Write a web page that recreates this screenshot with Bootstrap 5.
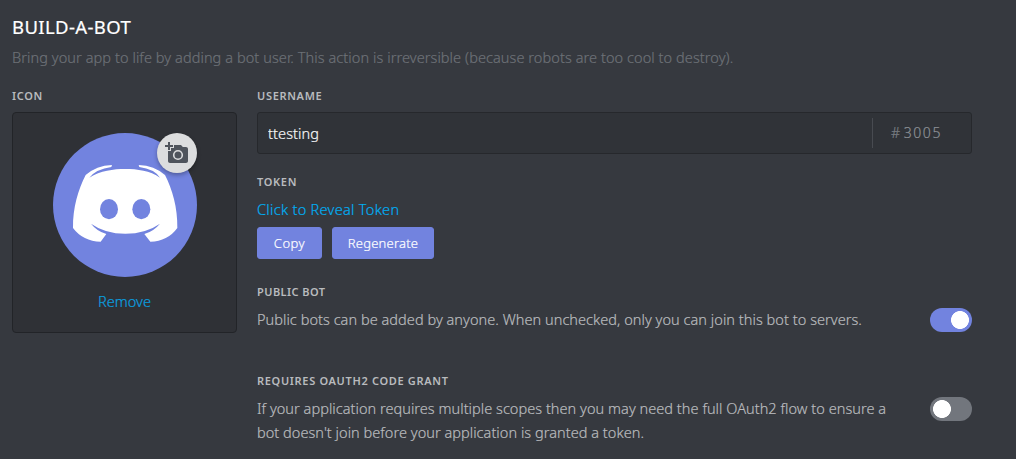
<!DOCTYPE html>
<html lang="en">
<head>
<meta charset="utf-8">
<meta name="viewport" content="width=device-width, initial-scale=1">
<title>Build-A-Bot</title>
<link href="https://cdn.jsdelivr.net/npm/bootstrap@5.3.0/dist/css/bootstrap.min.css" rel="stylesheet">
<style>
body{background:#36393f;font-family:"Noto Sans","Open Sans",sans-serif;font-size:14.5px;line-height:24px;font-weight:300;color:#b9bbbe;letter-spacing:.05px;-webkit-text-stroke:.2px;overflow:hidden}
.page{width:1016px;height:459px;padding:16px 44px 0 12px}
.title{font-size:18.5px;line-height:22px;font-weight:400;color:#fff;margin:0 0 7px;letter-spacing:.38px}
.intro{color:#6d7177;margin:0 0 19px;letter-spacing:.08px}
.caption{font-size:11px;line-height:16px;font-weight:600;letter-spacing:.68px;margin:0 0 8px;text-transform:uppercase;-webkit-text-stroke:0}
.caption.tight{letter-spacing:.45px}
.cols{gap:20px}
.icon-box{width:225px;height:221px;padding-top:20px;background:#2f3136;border:1px solid #222428;border-radius:4px}
.avatar{width:144px;height:144px}
.upload{width:40px;height:40px;background:#dcddde!important;box-shadow:0 2px 4px rgba(0,0,0,.3)}
.blue{color:#00aff4;text-decoration:none}
.remove{margin-top:12px;color:#0aa0e0}
.reveal{letter-spacing:.3px}
.name-field{height:42px;margin-bottom:20px;background:#303338;border:1px solid #26282c;border-radius:3px}
.name-field input{font-size:14.5px;font-weight:300;letter-spacing:.1px;color:#f6f6f7!important;padding:1px 10px 0;background:none!important;box-shadow:none!important}
.discrim{width:99px;height:30px;padding-left:18px;border-left:1px solid #484b51;color:#8e9297;font-size:14px;letter-spacing:1.6px}
.hash{margin-right:2px;color:#7c8086}
.token-area{margin-top:-1px}
.buttons{gap:10px;margin:6px 0 25px}
.btn-blurple{--bs-btn-color:#fff;--bs-btn-bg:#7283df;--bs-btn-border-color:#7283df;--bs-btn-hover-bg:#677bc4;--bs-btn-hover-color:#fff;height:32px;font-size:13px;line-height:20px;font-weight:300;padding:5px 0;border-radius:3px;letter-spacing:.2px}
.copy{width:65px;letter-spacing:.5px}
.regen{width:102px}
.setting{margin-bottom:41px}
.description{max-width:640px;margin:-1px 0 1px}
.oauth .description{letter-spacing:.045px}
.toggle{width:42px!important;height:24px;margin:0!important;border:0;background-color:#72767d!important;background-image:radial-gradient(circle at 12px 12px,#fff 8.6px,rgba(255,255,255,0) 9.3px)!important;background-position:0 0!important;background-size:42px 24px!important;box-shadow:none!important}
.toggle:checked{background-color:#7283df!important;background-image:radial-gradient(circle at 30px 12px,#fff 8.6px,rgba(255,255,255,0) 9.3px)!important}
</style>
</head>
<body>
<main class="page">
  <h1 class="title">BUILD-A-BOT</h1>
  <p class="intro">Bring your app to life by adding a bot user. This action is irreversible (because robots are too cool to destroy).</p>
  <div class="d-flex cols">
    <section>
      <h2 class="caption">Icon</h2>
      <div class="icon-box d-flex flex-column align-items-center">
        <div class="avatar position-relative">
          <svg class="d-block" width="144" height="144" viewBox="159 84 432 432">
            <circle cx="375" cy="300" r="216" fill="#7283df"/>
            <path fill="#fff" d="M336 180Q289 182 257 210C235 253 218 308 219 369Q249 409 302 410L319 387Q290 378 273 356Q315 386 376 386T480 356Q461 379 433 387L451 410Q503 409 532 369C533 308 517 253 495 210Q463 182 416 180L418 186Q463 192 480 218C450 197 412 192 376 192S302 197 268 218Q289 192 334 186Z"/>
            <ellipse cx="327" cy="312.500" rx="27" ry="30.500" fill="#7283df"/>
            <ellipse cx="424" cy="312.500" rx="27" ry="30.500" fill="#7283df"/>
          </svg>
          <button class="upload btn p-0 border-0 rounded-circle position-absolute top-0 end-0 d-flex align-items-center justify-content-center" aria-label="Upload icon">
            <svg width="24" height="24" viewBox="0 0 24 24" fill="#4f545c"><path d="M3 4V1h2v3h3v2H5v3H3V6H0V4h3zm3 6V7h3V4h7l1.830 2H21c1.100 0 2 .9 2 2v12c0 1.100-.9 2-2 2H5c-1.100 0-2-.9-2-2V10h3z"/><circle cx="13" cy="14" r="4.300" fill="none" stroke="#dcddde" stroke-width="1.600"/></svg>
          </button>
        </div>
        <a href="#" class="blue remove">Remove</a>
      </div>
    </section>
    <section class="flex-grow-1">
      <h2 class="caption">Username</h2>
      <div class="name-field d-flex align-items-center">
        <input class="form-control border-0" value="ttesting" aria-label="Username">
        <div class="discrim flex-shrink-0 d-flex align-items-center"><span class="hash">#</span>3005</div>
      </div>
      <h2 class="caption">Token</h2>
      <div class="token-area">
        <a href="#" class="blue reveal d-block">Click to Reveal Token</a>
        <div class="d-flex buttons">
          <button class="btn btn-blurple copy">Copy</button>
          <button class="btn btn-blurple regen">Regenerate</button>
        </div>
      </div>
      <div class="setting">
        <h2 class="caption tight">Public Bot</h2>
        <div class="d-flex justify-content-between">
          <p class="description">Public bots can be added by anyone. When unchecked, only you can join this bot to servers.</p>
          <div class="form-check form-switch p-0 m-0"><input class="form-check-input toggle" type="checkbox" role="switch" aria-label="Public bot" checked></div>
        </div>
      </div>
      <div class="oauth">
        <h2 class="caption">Requires OAuth2 Code Grant</h2>
        <div class="d-flex justify-content-between">
          <p class="description">If your application requires multiple scopes then you may need the full OAuth2 flow to ensure a bot doesn't join before your application is granted a token.</p>
          <div class="form-check form-switch p-0 m-0"><input class="form-check-input toggle" type="checkbox" role="switch" aria-label="Requires OAuth2 code grant"></div>
        </div>
      </div>
    </section>
  </div>
</main>
<script src="https://cdn.jsdelivr.net/npm/bootstrap@5.3.0/dist/js/bootstrap.bundle.min.js"></script>
</body>
</html>
